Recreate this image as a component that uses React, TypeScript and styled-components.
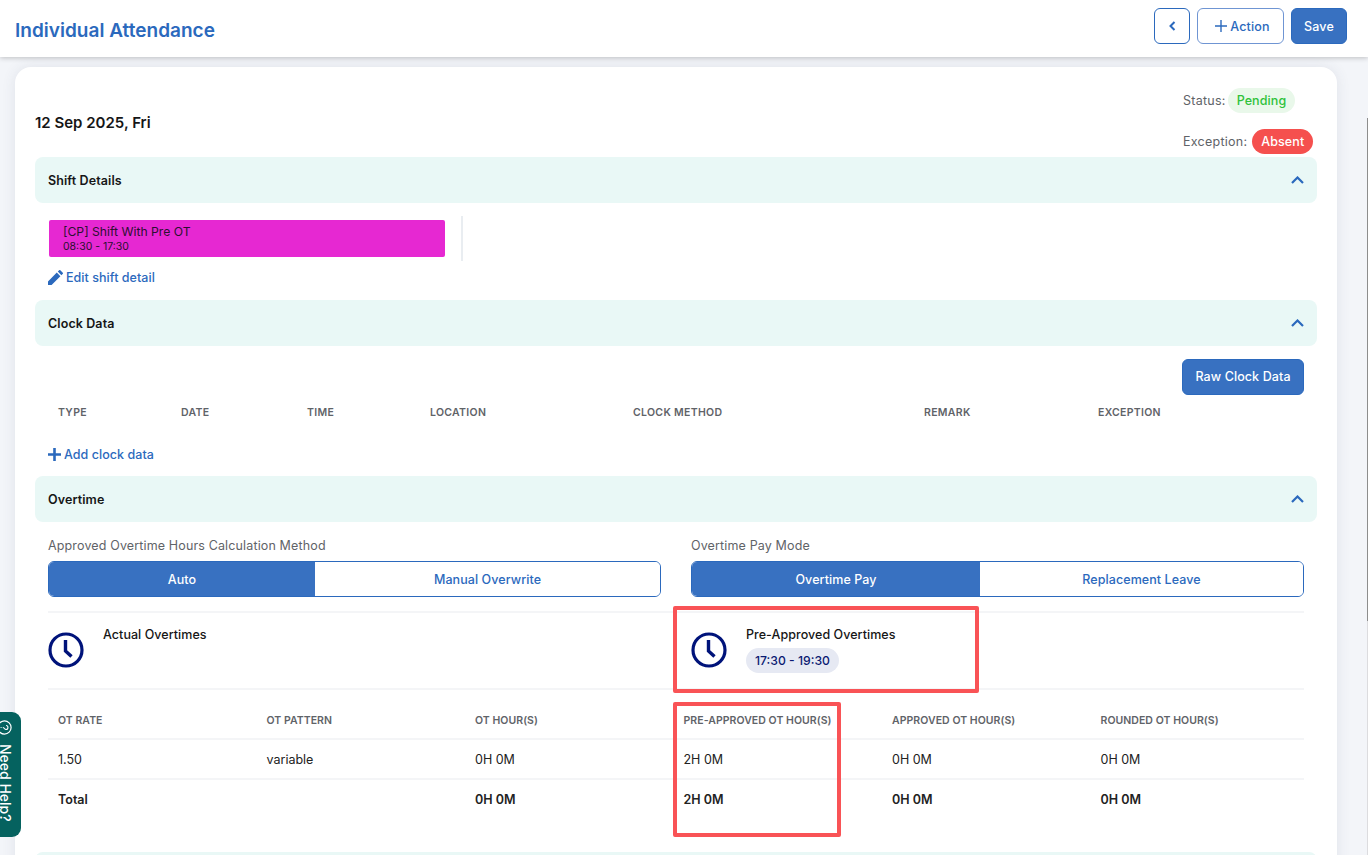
import React from "react";
import styled, { createGlobalStyle } from "styled-components";

const Global = createGlobalStyle`
  html, body { margin: 0; padding: 0; height: 855px; overflow: hidden; background: #f3f5f9; }
  * { box-sizing: border-box; }
  body { font-family: "Inter", "Liberation Sans", sans-serif; color: #161616; }
`;
const Page = styled.div`position: relative; width: 1368px; height: 855px; overflow: hidden;`;
const Header = styled.header`
  height: 57px; background: #fff; box-shadow: 0 1px 5px rgba(0,0,0,.22);
  display: flex; align-items: center; padding: 0 21px 0 15px; position: relative; z-index: 2;
`;
const Title = styled.h1`margin: 0; flex: 1; font-size: 19px; line-height: 24px; font-weight: 600; color: #2b69bd; padding-top: 4px; letter-spacing: .02px;`;
const Actions = styled.div`display: flex; gap: 7px; margin-top: -5px;`;
const HeadBtn = styled.button<{ $w: number; $solid?: boolean; $soft?: boolean }>`
  width: ${p => p.$w}px; height: 36px; border-radius: 6px; font: 500 12.5px "Inter", sans-serif; letter-spacing: .15px;
  display: flex; align-items: center; justify-content: center; gap: 3px; padding: 0 0 0 ${p => p.$soft ? 4 : 0}px;
  border: 1px solid ${p => p.$soft ? "#6f95d3" : "#2b69bd"}; background: ${p => p.$solid ? "#3871c1" : "#fff"}; color: ${p => p.$solid ? "#fff" : "#2b69bd"};
`;
const Card = styled.main`
  margin: 10px 0 0 15px; width: 1322px; background: #fff; border-radius: 16px; padding: 20px 20px 0;
  box-shadow: 0 0 14px rgba(60,70,100,.1);
`;
const TopRow = styled.div`height: 70px; display: flex; justify-content: space-between; position: relative;`;
const DateText = styled.div`font-size: 15px; font-weight: 600; line-height: 20px; margin-top: 26px;`;
const StatusCol = styled.div`position: absolute; top: 1px; left: 1148px; display: flex; flex-direction: column; gap: 16px;`;
const StatusRow = styled.div<{ $gap: number }>`display: flex; align-items: center; gap: ${p => p.$gap}px; font-size: 12.5px; letter-spacing: .25px; color: #5f6368; height: 25px;`;
const Pill = styled.span<{ $bg: string; $fg: string }>`
  height: 25px; border-radius: 13px; padding: 0 9px; display: inline-flex; align-items: center;
  background: ${p => p.$bg}; color: ${p => p.$fg}; font-size: 12.5px; font-weight: 500; letter-spacing: .1px;
`;
const Bar = styled.div`
  height: 46px; background: #e9f8f6; border-radius: 8px; display: flex; align-items: center;
  justify-content: space-between; padding: 0 13px 0 13px; font-size: 12.5px; font-weight: 600; letter-spacing: .1px;
`;
const ShiftBody = styled.div`height: 97px; padding: 13px 13px 0; `;
const ShiftRow = styled.div`display: flex; align-items: center; height: 45px; padding-left: 1px;`;
const ShiftBlock = styled.div`
  width: 396px; height: 37px; background: #e628d2; border-radius: 2px; padding: 4px 14px; color: #2a1030;
`;
const ShiftName = styled.div`font-size: 12.2px; line-height: 15px;`;
const ShiftTime = styled.div`font-size: 10.5px; line-height: 15px;`;
const VLine = styled.div`width: 2px; height: 45px; background: #e9edf1; margin-left: 16px;`;
const LinkLine = styled.div<{ $top?: number }>`
  display: flex; align-items: center; gap: 3px; color: #2b69bd; font-size: 12.5px; font-weight: 500; letter-spacing: .05px;
  margin-top: ${p => p.$top ?? 0}px; height: 20px;
`;
const ClockBody = styled.div`height: 130px; padding: 13px 13px 0;`;
const RawWrap = styled.div`display: flex; justify-content: flex-end;`;
const RawBtn = styled.button`
  width: 122px; height: 36px; background: #3871c1; border: 1px solid #2b69bd; border-radius: 6px; color: #fff;
  font: 500 12.5px "Inter", sans-serif; padding: 0 0 2px; letter-spacing: .1px;
`;
const ClockHead = styled.div`
  display: grid; grid-template-columns: 123px 126px 123px 203px 291px 174px 1fr; padding: 0 10px; margin-top: 7px; height: 20px; align-items: center;
`;
const Th = styled.div<{ $sp: number }>`font-size: 10.5px; font-weight: 600; color: #5f6368; letter-spacing: ${p => p.$sp}px; white-space: nowrap;`;
const OtBody = styled.div`padding: 13px 13px 0; height: 330px;`;
const TwoCol = styled.div`display: grid; grid-template-columns: 613px 613px; column-gap: 30px;`;
const FieldLabel = styled.div`font-size: 12.5px; color: #5f6368; line-height: 20px; padding-top: 1px; height: 26px; letter-spacing: .14px;`;
const Toggle = styled.div<{ $first: number }>`
  display: grid; grid-template-columns: ${p => p.$first}px 1fr; height: 36px; border: 1px solid #2b69bd; border-radius: 6px; overflow: hidden;
`;
const ToggleOpt = styled.div<{ $on?: boolean }>`
  display: flex; align-items: center; justify-content: center; font-size: 12.5px; font-weight: 500; letter-spacing: .08px;
  background: ${p => p.$on ? "#3871c1" : "#fff"}; color: ${p => p.$on ? "#fff" : "#2b69bd"};
`;
const OtPanel = styled.div`
  margin-top: 14px; height: 79px; border-top: 2px solid #f4f5f7; border-bottom: 2px solid #f4f5f7;
  display: grid; grid-template-columns: 613px 613px; column-gap: 30px;
`;
const OtItem = styled.div`display: flex; padding-top: 13px; gap: 19px;`;
const OtTitle = styled.div`font-size: 12.5px; font-weight: 500; line-height: 16px; letter-spacing: .05px; padding-top: 1px; height: 17px;`;
const TimePill = styled.span`
  display: inline-flex; align-items: center; margin-top: 5px; height: 25px; padding: 0 9px; border-radius: 13px;
  background: #e6e9f3; color: #0a1a72; font-size: 12.2px; font-weight: 500;
`;
const Grid6 = styled.div<{ $h: number; $line?: boolean; $top?: number; $bottom?: number }>`
  display: grid; grid-template-columns: repeat(6, 208.5px); height: ${p => p.$h}px; align-items: center;
  padding: ${p => p.$top ?? 0}px 10px ${p => p.$bottom ?? 0}px;
  ${p => p.$line ? "border-bottom: 2px solid #f4f5f7;" : ""}
`;
const Td = styled.div<{ $b?: boolean }>`font-size: 12.5px; font-weight: ${p => p.$b ? 600 : 400}; color: #222;`;
const Highlight = styled.div<{ $l: number; $t: number; $w: number; $h: number }>`
  position: absolute; left: ${p => p.$l}px; top: ${p => p.$t}px; width: ${p => p.$w}px; height: ${p => p.$h}px;
  border: 4px solid #f95356; border-radius: 2px; pointer-events: none; z-index: 3;
`;
const HelpTab = styled.div`
  position: absolute; left: 0; top: 712px; width: 21px; height: 125px; background: #05625f; border-radius: 0 9px 9px 0;
  overflow: hidden; z-index: 4;
`;
const HelpInner = styled.div`
  position: absolute; left: 14px; top: 8px; transform-origin: 0 0; transform: rotate(90deg); white-space: nowrap;
  display: flex; align-items: center; gap: 9px; color: #fff; font-size: 14px; font-weight: 500; line-height: 18px;
`;
const NextBar = styled.div`height: 46px; background: #e9f8f6; border-radius: 8px;`;
const ScrollTrack = styled.div`position: absolute; right: 0; top: 118px; width: 1px; height: 737px; background: #dcdcdf; z-index: 5;`;
const ScrollThumb = styled.div`height: 503px; background: #8d8d8d;`;

const Chevron = () => (
  <svg width="13" height="8" viewBox="0 0 13 8" fill="none"><path d="M1 7 6.5 1.5 12 7" stroke="#2b69bd" strokeWidth="2.2" /></svg>
);
const Clock = () => (
  <svg width="36" height="36" viewBox="0 0 36 36" fill="none" style={{ flex: "none", marginTop: 6 }}>
    <circle cx="18" cy="18" r="16" stroke="#00137a" strokeWidth="3.2" />
    <path d="M17.5 8v11l6 5.5" stroke="#00137a" strokeWidth="3.4" />
  </svg>
);
const Pencil = () => (
  <svg width="15" height="15" viewBox="0 0 15 15"><path d="M0 15v-3.6L8.8 2.6l3.6 3.6L3.6 15zM9.8 1.6 11.2.2a.8.8 0 0 1 1.1 0l2.5 2.5a.8.8 0 0 1 0 1.1L13.4 5.2z" fill="#2b69bd" /></svg>
);
const Plus = ({ s = 13, w = 2 }: { s?: number; w?: number }) => (
  <svg width={s} height={s} viewBox="0 0 13 13"><path d="M6.5 0v13M0 6.5h13" stroke="#2b69bd" strokeWidth={w} /></svg>
);

const otHeads = ["OT RATE", "OT PATTERN", "OT HOUR(S)", "PRE-APPROVED OT HOUR(S)", "APPROVED OT HOUR(S)", "ROUNDED OT HOUR(S)"];
const clockHeads = ["TYPE", "DATE", "TIME", "LOCATION", "CLOCK METHOD", "REMARK", "EXCEPTION"];

export default function App() {
  return (
    <Page>
      <Global />
      <Header>
        <Title>Individual Attendance</Title>
        <Actions>
          <HeadBtn $w={36}>
            <svg width="7" height="10" viewBox="0 0 7 10" fill="none"><path d="M5.5 1 1.5 5l4 4" stroke="#2b69bd" strokeWidth="2" /></svg>
          </HeadBtn>
          <HeadBtn $w={87} $soft><Plus s={12} w={1.5} />Action</HeadBtn>
          <HeadBtn $w={56} $solid>Save</HeadBtn>
        </Actions>
      </Header>
      <Card>
        <TopRow>
          <DateText>12 Sep 2025, Fri</DateText>
          <StatusCol>
            <StatusRow $gap={2}>Status: <Pill $bg="#e9f8ea" $fg="#2ec23a">Pending</Pill></StatusRow>
            <StatusRow $gap={5}>Exception: <Pill $bg="#f5504e" $fg="#fff">Absent</Pill></StatusRow>
          </StatusCol>
        </TopRow>
        <Bar>Shift Details<Chevron /></Bar>
        <ShiftBody>
          <ShiftRow>
            <ShiftBlock>
              <ShiftName>[CP] Shift With Pre OT</ShiftName>
              <ShiftTime>08:30 - 17:30</ShiftTime>
            </ShiftBlock>
            <VLine />
          </ShiftRow>
          <LinkLine $top={6}><Pencil />Edit shift detail</LinkLine>
        </ShiftBody>
        <Bar>Clock Data<Chevron /></Bar>
        <ClockBody>
          <RawWrap><RawBtn>Raw Clock Data</RawBtn></RawWrap>
          <ClockHead>{clockHeads.map(h => <Th key={h} $sp={0.3}>{h}</Th>)}</ClockHead>
          <LinkLine $top={22}><Plus w={2.6} />Add clock data</LinkLine>
        </ClockBody>
        <Bar>Overtime<Chevron /></Bar>
        <OtBody>
          <TwoCol>
            <div>
              <FieldLabel>Approved Overtime Hours Calculation Method</FieldLabel>
              <Toggle $first={266}>
                <ToggleOpt $on>Auto</ToggleOpt><ToggleOpt>Manual Overwrite</ToggleOpt>
              </Toggle>
            </div>
            <div>
              <FieldLabel>Overtime Pay Mode</FieldLabel>
              <Toggle $first={288}>
                <ToggleOpt $on>Overtime Pay</ToggleOpt><ToggleOpt>Replacement Leave</ToggleOpt>
              </Toggle>
            </div>
          </TwoCol>
          <OtPanel>
            <OtItem><Clock /><div><OtTitle>Actual Overtimes</OtTitle></div></OtItem>
            <OtItem><Clock /><div><OtTitle>Pre-Approved Overtimes</OtTitle><TimePill>17:30 - 19:30</TimePill></div></OtItem>
          </OtPanel>
          <Grid6 $h={50} $line $top={12}>{otHeads.map(h => <Th key={h} $sp={0.05}>{h}</Th>)}</Grid6>
          <Grid6 $h={40} $line>
            {["1.50", "variable", "0H 0M", "2H 0M", "0H 0M", "0H 0M"].map((v, i) => <Td key={i}>{v}</Td>)}
          </Grid6>
          <Grid6 $h={40} $bottom={2}>
            {["Total", "", "0H 0M", "2H 0M", "0H 0M", "0H 0M"].map((v, i) => <Td key={i} $b>{v}</Td>)}
          </Grid6>
        </OtBody>
        <NextBar />
      </Card>
      <Highlight $l={673} $t={606} $w={306} $h={87} />
      <Highlight $l={673} $t={702} $w={168} $h={135} />
      <HelpTab>
        <HelpInner>
          <svg width="15" height="15" viewBox="0 0 15 15" fill="none"><circle cx="7.5" cy="7.5" r="6.6" stroke="#fff" strokeWidth="1.2" /><path d="M5.5 6c0-2.6 4-2.6 4 0 0 1.6-2 1.5-2 3.2M7.5 10.4v1" stroke="#fff" strokeWidth="1.1" /></svg>
          Need Help?
        </HelpInner>
      </HelpTab>
      <ScrollTrack><ScrollThumb /></ScrollTrack>
    </Page>
  );
}
